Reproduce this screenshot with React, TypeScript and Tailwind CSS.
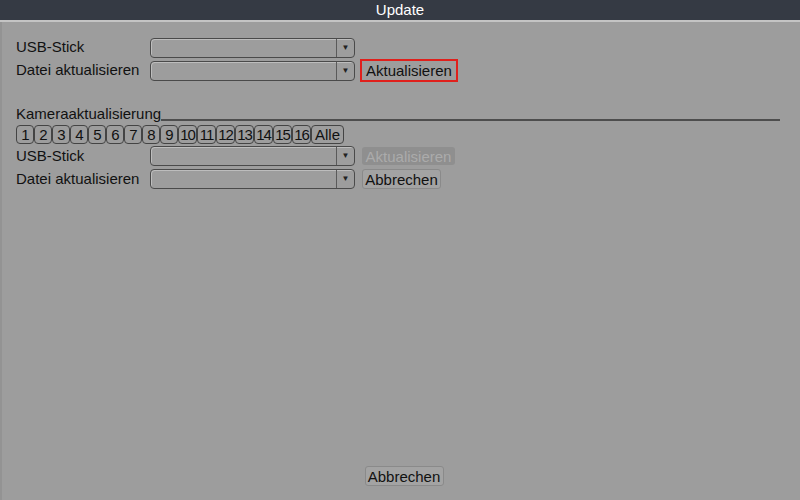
import React from "react";

function Select({ className = "" }: { className?: string }) {
  return (
    <div
      className={`flex h-[20px] w-[205px] rounded-[4px] border border-[#4a4a4a] shadow-[inset_1px_1px_0_#bdbdbd] ${className}`}
    >
      <div className="flex-1" />
      <div className="flex w-[18px] items-center justify-center border-l border-[#5a5a5a]">
        <span className="text-[8px] leading-none text-[#222]">▼</span>
      </div>
    </div>
  );
}

export default function App() {
  const nums = Array.from({ length: 16 }, (_, i) => i + 1);

  return (
    <div className="flex h-[500px] w-[800px] flex-col bg-[#9d9d9d] font-['Liberation_Sans',Arial,sans-serif] text-[15px] text-[#111]">
      <div className="flex h-[22px] items-center justify-center border-b-2 border-[#c4c4c4] bg-[#353a44] text-[15px] text-white">
        Update
      </div>

      <div className="flex flex-1 flex-col border-l-2 border-[#939393] pl-[14px] pt-[14px]">
        <div className="flex h-[23px] items-center">
          <span className="w-[134px]">USB-Stick</span>
          <Select />
        </div>
        <div className="flex h-[23px] items-center">
          <span className="w-[134px]">Datei aktualisieren</span>
          <Select />
          <button className="ml-[5px] h-[23px] border-2 border-[#e0201c] px-[4px] leading-none">
            Aktualisieren
          </button>
        </div>

        <div className="mt-[23px] flex items-end">
          <span className="leading-[18px]">Kameraaktualisierung</span>
          <div className="mb-[2px] mr-[20px] h-[2px] flex-1 bg-[#4d4d4d]" />
        </div>

        <div className="mt-[2px] flex h-[19px]">
          {nums.map((n) => (
            <div
              key={n}
              className={`flex h-[19px] items-center justify-center rounded-[4px] border border-[#444] leading-none tracking-[-1px] ${
                n < 10 ? "w-[18px]" : "w-[19px]"
              }`}
            >
              {n}
            </div>
          ))}
          <div className="flex h-[19px] w-[33px] items-center justify-center rounded-[4px] border border-[#444] leading-none">
            Alle
          </div>
        </div>

        <div className="mt-[2px] flex h-[20px] items-center">
          <span className="w-[134px]">USB-Stick</span>
          <Select />
          <div className="ml-[7px] flex h-[18px] w-[93px] items-center justify-center rounded-[3px] bg-[#8f8f8f] leading-none text-[#ababab]">
            Aktualisieren
          </div>
        </div>
        <div className="mt-[2px] flex h-[22px] items-center">
          <span className="w-[134px]">Datei aktualisieren</span>
          <Select />
          <div className="ml-[7px] flex h-[20px] w-[79px] items-center justify-center rounded-[3px] border border-[#8a8a8a] bg-[#a3a3a3] leading-none">
            Abbrechen
          </div>
        </div>

        <div className="flex-1" />

        <div className="mb-[14px] flex justify-center pr-[8px]">
          <div className="flex h-[20px] w-[79px] items-center justify-center rounded-[3px] border border-[#8a8a8a] bg-[#a3a3a3] leading-none">
            Abbrechen
          </div>
        </div>
      </div>
    </div>
  );
}
